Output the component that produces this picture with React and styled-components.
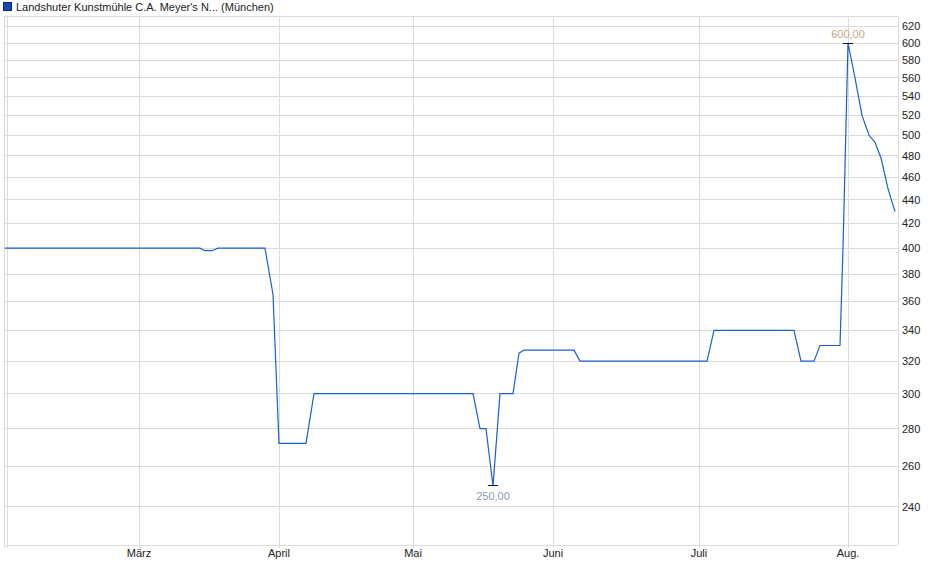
import React from 'react';
import styled, { createGlobalStyle } from 'styled-components';

const Global = createGlobalStyle`
  body { margin: 0; background: #fff; font-family: "Liberation Sans", Arial, sans-serif; }
`;

const Wrap = styled.div`
  width: 940px;
  height: 579px;
  display: flex;
  flex-direction: column;
`;

const Legend = styled.div`
  display: flex;
  align-items: center;
  gap: 4px;
  height: 13px;
  padding: 0 0 0 3px;
  font-size: 11px;
  color: #222;
`;

const Swatch = styled.span`
  width: 7px;
  height: 7px;
  background: #1a47b8;
  border: 1px solid #0a2a70;
`;

const TOP = 43;
const K = 506;
const yOf = (v) => TOP + K * Math.log(600 / v);

const ticks = [240, 260, 280, 300, 320, 340, 360, 380, 400, 420, 440, 460, 480, 500, 520, 540, 560, 580, 600, 620];
const months = [
  ['März', 139],
  ['April', 279],
  ['Mai', 413],
  ['Juni', 553],
  ['Juli', 699],
  ['Aug.', 848],
];
const data = [
  [5, 400], [200, 400], [205, 398], [212, 398], [218, 400], [265, 400], [273, 365], [279, 272],
  [306, 272], [314, 300], [473, 300], [480, 280], [486, 280], [493, 250], [500, 300], [513, 300],
  [519, 325], [524, 327], [574, 327], [580, 320], [707, 320], [714, 340], [794, 340], [801, 320],
  [814, 320], [820, 330], [840, 330], [843, 400], [848, 600], [855, 560], [862, 520], [869, 500],
  [875, 493], [881, 478], [888, 450], [895, 430],
];

const Chart = () => {
  const pts = data.map(([x, v]) => `${x},${(yOf(v) - 13).toFixed(1)}`).join(' ');
  const off = (v) => yOf(v) - 13;
  return (
    <svg width="940" height="566" style={{ display: 'block' }}>
      <g stroke="#dcdcdc" strokeWidth="1" shapeRendering="crispEdges">
        {ticks.map((t) => (
          <line key={t} x1="5" x2="898" y1={off(t)} y2={off(t)} />
        ))}
        {months.map(([m, x]) => (
          <line key={m} x1={x} x2={x} y1="3" y2="535" />
        ))}
        <line x1="4" x2="4" y1="3" y2="535" />
        <line x1="7" x2="7" y1="3" y2="535" />
        <line x1="898" x2="898" y1="3" y2="532" />
        <line x1="4" x2="898" y1="532" y2="532" />
        <line x1="4" x2="898" y1="3" y2="3" />
      </g>
      <g fontSize="11" fill="#222" fontFamily="Liberation Sans, Arial, sans-serif">
        {ticks.map((t) => (
          <text key={t} x="902" y={off(t) + 4}>{t}</text>
        ))}
        {months.map(([m, x]) => (
          <text key={m} x={x} y="544" textAnchor="middle">{m}</text>
        ))}
      </g>
      <polyline points={pts} fill="none" stroke="#1a5fd0" strokeWidth="1.2" />
      <g stroke="#111" strokeWidth="1" shapeRendering="crispEdges">
        <line x1="843" x2="853" y1={off(600)} y2={off(600)} />
        <line x1="488" x2="498" y1={off(250)} y2={off(250)} />
      </g>
      <text x="848" y={off(600) - 5} fontSize="11" textAnchor="middle" fill="#c9a77e">600,00</text>
      <text x="493" y={off(250) + 14} fontSize="11" textAnchor="middle" fill="#8a9cb5">250,00</text>
    </svg>
  );
};

export default function App() {
  return (
    <Wrap>
      <Global />
      <Legend>
        <Swatch />
        Landshuter Kunstmühle C.A. Meyer's N... (München)
      </Legend>
      <Chart />
    </Wrap>
  );
}
